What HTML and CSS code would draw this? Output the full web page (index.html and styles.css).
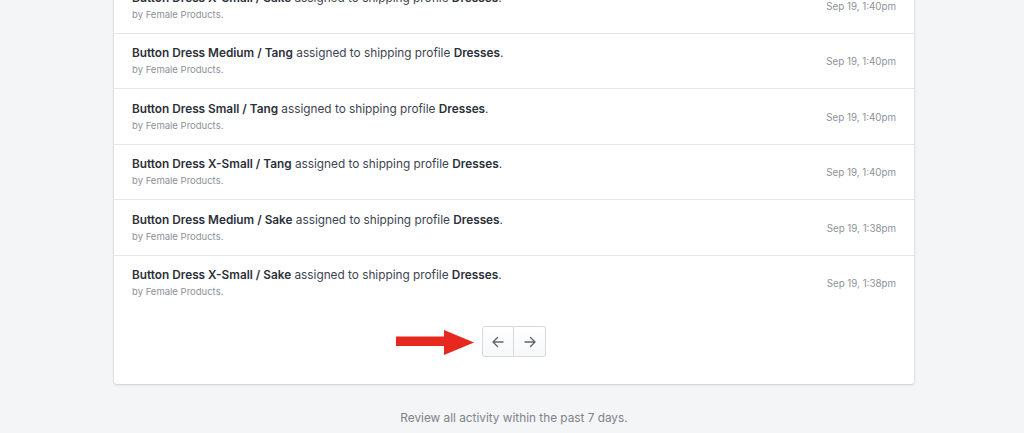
FILE: index.html
```html
<!DOCTYPE html>
<html>
<head>
<meta charset="utf-8">
<link rel="stylesheet" href="styles.css">
</head>
<body>
<div class="page">
  <div class="card">
    <div class="row">
      <div class="info">
        <div class="title"><b>Button Dress X-Small / Sake</b> assigned to shipping profile <b>Dresses</b>.</div>
        <div class="sub">by Female Products.</div>
      </div>
      <div class="time">Sep 19, 1:40pm</div>
    </div>
    <div class="row">
      <div class="info">
        <div class="title"><b>Button Dress Medium / Tang</b> assigned to shipping profile <b>Dresses</b>.</div>
        <div class="sub">by Female Products.</div>
      </div>
      <div class="time">Sep 19, 1:40pm</div>
    </div>
    <div class="row">
      <div class="info">
        <div class="title"><b>Button Dress Small / Tang</b> assigned to shipping profile <b>Dresses</b>.</div>
        <div class="sub">by Female Products.</div>
      </div>
      <div class="time">Sep 19, 1:40pm</div>
    </div>
    <div class="row">
      <div class="info">
        <div class="title"><b>Button Dress X-Small / Tang</b> assigned to shipping profile <b>Dresses</b>.</div>
        <div class="sub">by Female Products.</div>
      </div>
      <div class="time">Sep 19, 1:40pm</div>
    </div>
    <div class="row">
      <div class="info">
        <div class="title"><b>Button Dress Medium / Sake</b> assigned to shipping profile <b>Dresses</b>.</div>
        <div class="sub">by Female Products.</div>
      </div>
      <div class="time">Sep 19, 1:38pm</div>
    </div>
    <div class="row last">
      <div class="info">
        <div class="title"><b>Button Dress X-Small / Sake</b> assigned to shipping profile <b>Dresses</b>.</div>
        <div class="sub">by Female Products.</div>
      </div>
      <div class="time">Sep 19, 1:38pm</div>
    </div>
    <div class="pager">
      <div class="pager-group">
        <svg class="annot" width="80" height="26" viewBox="0 0 80 26"><path d="M0 6.5 H48 V0 L78 12.5 L48 25 V16 H0 Z" fill="#e8271f"/></svg>
        <button class="pbtn"><svg width="14" height="14" viewBox="0 0 14 14"><path d="M12 7H2M6.5 2.5L2 7l4.5 4.5" fill="none" stroke="#5f6670" stroke-width="1.4" stroke-linecap="round" stroke-linejoin="round"/></svg></button>
        <button class="pbtn"><svg width="14" height="14" viewBox="0 0 14 14"><path d="M2 7h10M7.5 2.5L12 7l-4.5 4.5" fill="none" stroke="#5f6670" stroke-width="1.4" stroke-linecap="round" stroke-linejoin="round"/></svg></button>
      </div>
    </div>
  </div>
  <div class="footer">Review all activity within the past 7 days.</div>
</div>
</body>
</html>
```
FILE: styles.css
```css
html, body {
  margin: 0;
  padding: 0;
  background: #f4f5f7;
  font-family: Inter, "Noto Sans", sans-serif;
  overflow: hidden;
}
.page {
  width: 800px;
  margin-left: 114px;
}
.card {
  margin-top: -22px;
  background: #fff;
  border-radius: 3px;
  box-shadow: 0 0 0 1px rgba(63,63,68,0.06), 0 1px 3px rgba(63,63,68,0.15);
}
.row {
  display: flex;
  align-items: center;
  justify-content: space-between;
  padding: 10.75px 18px 9.75px;
  border-bottom: 1px solid #e6e7ea;
}
.row.last {
  border-bottom: none;
}
.title {
  font-size: 11.8px;
  line-height: 18px;
  color: #3d4350;
}
.title b {
  font-weight: 600;
  color: #2b3039;
}
.sub {
  font-size: 9.5px;
  line-height: 16px;
  color: #8c9199;
}
.time {
  font-size: 9.75px;
  color: #8c9199;
  padding-top: 1px;
}
.pager {
  display: flex;
  justify-content: center;
  padding: 16px 0 27px;
}
.pager-group {
  position: relative;
  display: flex;
}
.annot {
  position: absolute;
  left: -86px;
  top: 4px;
}
.pbtn {
  width: 32px;
  height: 31px;
  padding: 0;
  display: flex;
  align-items: center;
  justify-content: center;
  background: linear-gradient(#fff, #f7f8f9);
  border: 1px solid #d6d9de;
  cursor: pointer;
}
.pbtn:first-of-type {
  border-radius: 3px 0 0 3px;
}
.pbtn + .pbtn {
  border-left: none;
  border-radius: 0 3px 3px 0;
}
.footer {
  text-align: center;
  font-size: 11.8px;
  color: #7d828b;
  padding-top: 27px;
}
```
